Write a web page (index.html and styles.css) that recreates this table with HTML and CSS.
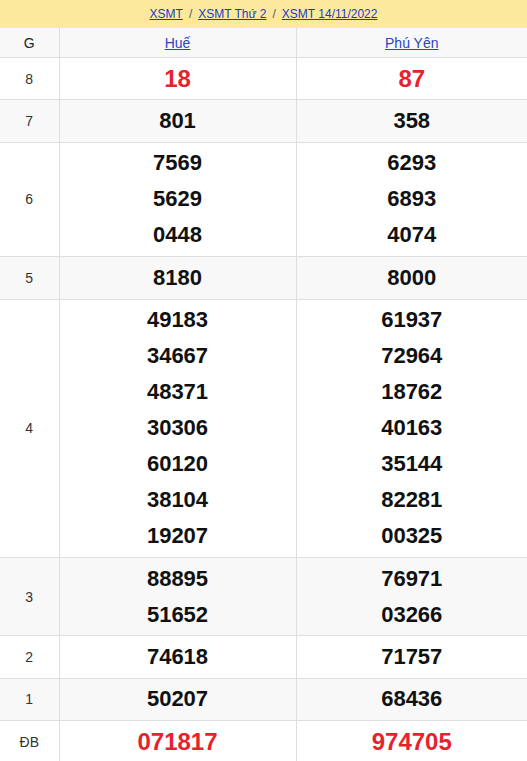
FILE: index.html
```html
<!DOCTYPE html>
<html lang="vi">
<head>
<meta charset="utf-8">
<title>XSMT 14/11/2022</title>
<link rel="stylesheet" href="styles.css">
</head>
<body>
<div class="crumbs">
  <a href="#">XSMT</a><span class="sep">/</span><a href="#">XSMT Thứ 2</a><span class="sep">/</span><a href="#">XSMT 14/11/2022</a>
</div>
<table class="kq">
  <colgroup><col class="c1"><col class="c2"><col class="c3"></colgroup>
  <thead>
    <tr><th class="g">G</th><th><a href="#">Huế</a></th><th><a href="#">Phú Yên</a></th></tr>
  </thead>
  <tbody>
    <tr><td class="g">8</td><td class="n red big"><div>18</div></td><td class="n red big"><div>87</div></td></tr>
    <tr class="alt"><td class="g">7</td><td class="n"><div>801</div></td><td class="n"><div>358</div></td></tr>
    <tr><td class="g">6</td><td class="n"><div>7569</div><div>5629</div><div>0448</div></td><td class="n"><div>6293</div><div>6893</div><div>4074</div></td></tr>
    <tr class="alt"><td class="g">5</td><td class="n"><div>8180</div></td><td class="n"><div>8000</div></td></tr>
    <tr><td class="g">4</td><td class="n"><div>49183</div><div>34667</div><div>48371</div><div>30306</div><div>60120</div><div>38104</div><div>19207</div></td><td class="n"><div>61937</div><div>72964</div><div>18762</div><div>40163</div><div>35144</div><div>82281</div><div>00325</div></td></tr>
    <tr class="alt"><td class="g">3</td><td class="n"><div>88895</div><div>51652</div></td><td class="n"><div>76971</div><div>03266</div></td></tr>
    <tr><td class="g">2</td><td class="n"><div>74618</div></td><td class="n"><div>71757</div></td></tr>
    <tr class="alt"><td class="g">1</td><td class="n"><div>50207</div></td><td class="n"><div>68436</div></td></tr>
    <tr><td class="g">ĐB</td><td class="n red big"><div>071817</div></td><td class="n red big"><div>974705</div></td></tr>
  </tbody>
</table>
</body>
</html>
```
FILE: styles.css
```css
html, body {
  margin: 0;
  padding: 0;
  background: #fff;
  font-family: "Liberation Sans", Arial, sans-serif;
  color: #222;
}
.crumbs {
  height: 28px;
  background: #fde99e;
  display: flex;
  align-items: center;
  justify-content: center;
  font-size: 12px;
}
.crumbs a {
  color: #1a3acb;
  text-decoration: underline;
}
.crumbs .sep {
  color: #555;
  padding: 0 6px;
}
.kq {
  width: 100%;
  border-collapse: collapse;
  table-layout: fixed;
}
.c1 { width: 59px; }
.c2 { width: 237px; }
.kq th, .kq td {
  border: 1px solid #dedede;
  text-align: center;
  vertical-align: middle;
}
.kq tr:first-child th { border-top: none; }
.kq th:first-child, .kq td:first-child { border-left: none; }
.kq th:last-child, .kq td:last-child { border-right: none; }
.kq th {
  background: #f8f8f8;
  font-weight: normal;
  font-size: 14px;
  height: 29px;
  padding: 0;
}
.kq th a { color: #2a43c8; }
.kq tr.alt td { background: #f8f8f8; }
.kq td.g {
  font-size: 14px;
  color: #333;
  padding: 0;
}
.kq td.n {
  padding: 2.7px 0;
  font-size: 22px;
  font-weight: bold;
  line-height: 36px;
  color: #111;
}
.kq td.red { color: #e8222d; }
.kq td.big { font-size: 24px; }
```
